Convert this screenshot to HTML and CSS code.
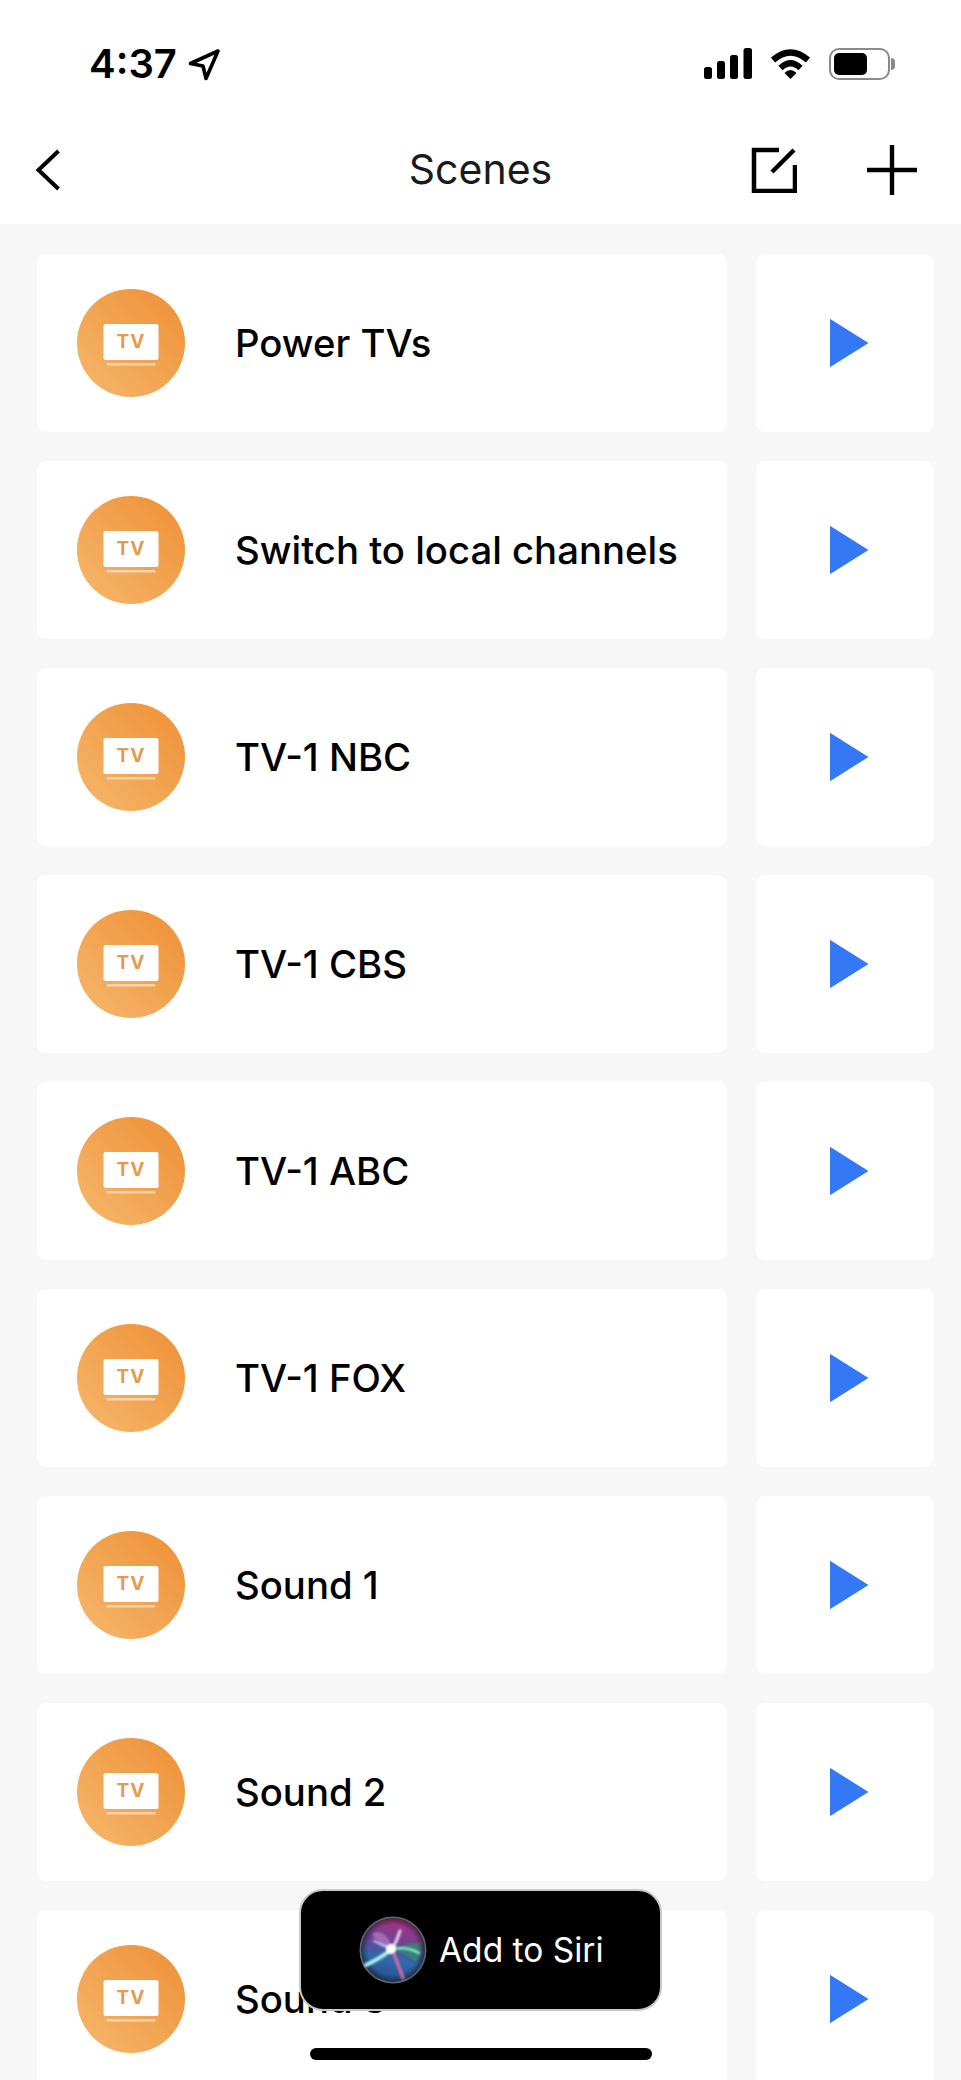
FILE: index.html
```html
<!DOCTYPE html>
<html lang="en">
<head>
    <meta charset="UTF-8">
    <meta name="viewport" content="width=device-width, initial-scale=1.0">
    <title>Scenes</title>
    <link rel="stylesheet" href="styles.css">
</head>
<body>
    <svg class="defs" width="0" height="0">
        <symbol id="tv-icon" viewBox="0 0 108 108">
            <rect x="26.5" y="35" width="55" height="36" rx="2" fill="#fff"/>
            <rect x="29.5" y="74" width="49" height="2.5" rx="1" fill="#fff" opacity="0.5"/>
        </symbol>
    </svg>

    <div class="phone">
        <header class="top">
            <div class="status-bar">
                <div class="status-left">
                    <span class="time">4:37</span>
                    <svg class="arrow" width="33" height="33" viewBox="0 0 33 33">
                        <path d="M2.5 15.5 L30 3 L18 30.5 L15 18 Z" fill="none" stroke="#000" stroke-width="3.6" stroke-linejoin="round"/>
                    </svg>
                </div>
                <div class="status-right">
                    <svg width="48" height="31" viewBox="0 0 48 31">
                        <rect x="0" y="19" width="8" height="12" rx="2.5"/>
                        <rect x="13" y="13" width="8" height="18" rx="2.5"/>
                        <rect x="26" y="7" width="8" height="24" rx="2.5"/>
                        <rect x="39.5" y="0" width="8.5" height="31" rx="2.5"/>
                    </svg>
                    <svg width="41" height="31" viewBox="0 0 41 31">
                        <path d="M3 12 Q20.5 -3 38 12" fill="none" stroke="#000" stroke-width="6.4" stroke-linecap="butt"/>
                        <path d="M10.5 20 Q20.5 10.5 30.5 20" fill="none" stroke="#000" stroke-width="6" stroke-linecap="butt"/>
                        <path d="M14.5 25 Q20.5 19 26.5 25 L20.5 31 Z"/>
                    </svg>
                    <div class="battery">
                        <div class="battery-level"></div>
                        <div class="battery-nub"></div>
                    </div>
                </div>
            </div>
            <nav class="nav">
                <svg class="back" width="26" height="44" viewBox="0 0 26 44">
                    <path d="M23.5 3 L3.5 22 L23.5 41" fill="none" stroke="#000" stroke-width="4"/>
                </svg>
                <h1>Scenes</h1>
                <div class="nav-actions">
                    <svg width="46" height="46" viewBox="0 0 46 46">
                        <path d="M28 3 H3 V44 H44 V18" fill="none" stroke="#000" stroke-width="4.5"/>
                        <path d="M21 25 L43 3" fill="none" stroke="#000" stroke-width="4.5"/>
                    </svg>
                    <svg width="50" height="50" viewBox="0 0 50 50">
                        <path d="M25 0 V50 M0 25 H50" fill="none" stroke="#000" stroke-width="4.4"/>
                    </svg>
                </div>
            </nav>
        </header>

        <main class="scene-list">
            <div class="scene">
                <div class="scene-card">
                    <div class="scene-icon"><svg width="108" height="108"><use href="#tv-icon"/></svg><span class="tv-label">TV</span></div>
                    <span class="scene-name">Power TVs</span>
                </div>
                <div class="play-card"><div class="play"></div></div>
            </div>
            <div class="scene">
                <div class="scene-card">
                    <div class="scene-icon"><svg width="108" height="108"><use href="#tv-icon"/></svg><span class="tv-label">TV</span></div>
                    <span class="scene-name">Switch to local channels</span>
                </div>
                <div class="play-card"><div class="play"></div></div>
            </div>
            <div class="scene">
                <div class="scene-card">
                    <div class="scene-icon"><svg width="108" height="108"><use href="#tv-icon"/></svg><span class="tv-label">TV</span></div>
                    <span class="scene-name">TV-1 NBC</span>
                </div>
                <div class="play-card"><div class="play"></div></div>
            </div>
            <div class="scene">
                <div class="scene-card">
                    <div class="scene-icon"><svg width="108" height="108"><use href="#tv-icon"/></svg><span class="tv-label">TV</span></div>
                    <span class="scene-name">TV-1 CBS</span>
                </div>
                <div class="play-card"><div class="play"></div></div>
            </div>
            <div class="scene">
                <div class="scene-card">
                    <div class="scene-icon"><svg width="108" height="108"><use href="#tv-icon"/></svg><span class="tv-label">TV</span></div>
                    <span class="scene-name">TV-1 ABC</span>
                </div>
                <div class="play-card"><div class="play"></div></div>
            </div>
            <div class="scene">
                <div class="scene-card">
                    <div class="scene-icon"><svg width="108" height="108"><use href="#tv-icon"/></svg><span class="tv-label">TV</span></div>
                    <span class="scene-name">TV-1 FOX</span>
                </div>
                <div class="play-card"><div class="play"></div></div>
            </div>
            <div class="scene">
                <div class="scene-card">
                    <div class="scene-icon"><svg width="108" height="108"><use href="#tv-icon"/></svg><span class="tv-label">TV</span></div>
                    <span class="scene-name">Sound 1</span>
                </div>
                <div class="play-card"><div class="play"></div></div>
            </div>
            <div class="scene">
                <div class="scene-card">
                    <div class="scene-icon"><svg width="108" height="108"><use href="#tv-icon"/></svg><span class="tv-label">TV</span></div>
                    <span class="scene-name">Sound 2</span>
                </div>
                <div class="play-card"><div class="play"></div></div>
            </div>
            <div class="scene">
                <div class="scene-card">
                    <div class="scene-icon"><svg width="108" height="108"><use href="#tv-icon"/></svg><span class="tv-label">TV</span></div>
                    <span class="scene-name">Sound 3</span>
                </div>
                <div class="play-card"><div class="play"></div></div>
            </div>
        </main>

        <button class="siri-button">
            <svg width="68" height="68" viewBox="0 0 68 68">
                <defs>
                    <linearGradient id="siri-bg" x1="0.6" y1="0" x2="0.4" y2="1">
                        <stop offset="0" stop-color="#b2307f"/>
                        <stop offset="0.4" stop-color="#6a4296"/>
                        <stop offset="0.65" stop-color="#2f69ad"/>
                        <stop offset="1" stop-color="#274f8c"/>
                    </linearGradient>
                    <radialGradient id="siri-edge" cx="50%" cy="50%" r="50%">
                        <stop offset="0.78" stop-color="#111" stop-opacity="0"/>
                        <stop offset="1" stop-color="#111" stop-opacity="0.55"/>
                    </radialGradient>
                    <filter id="siri-blur"><feGaussianBlur stdDeviation="0.8"/></filter>
                </defs>
                <circle cx="34" cy="34" r="32.5" fill="url(#siri-bg)" stroke="#5b6472" stroke-width="2"/>
                <path d="M63 27 Q64 38 58 46 Q46 38 34 33 Q48 26 63 27 Z" fill="#2f8e6e" opacity="0.8" filter="url(#siri-blur)"/>
                <path d="M13 17 Q28 13 34 33 Q20 33 13 17 Z" fill="#c98fd0" opacity="0.55" filter="url(#siri-blur)"/>
                <circle cx="34" cy="34" r="32" fill="url(#siri-edge)"/>
                <g filter="url(#siri-blur)" fill="none" stroke-linecap="round">
                    <path d="M7 49 Q22 42 33 33" stroke="#a8f4ea" stroke-width="4"/>
                    <path d="M33 33 Q48 30 60 37" stroke="#8ff0cf" stroke-width="2.4"/>
                    <path d="M41 15 Q38 25 33 33" stroke="#ecd0ec" stroke-width="3"/>
                    <path d="M33 33 Q39 48 44 62" stroke="#cf6aa6" stroke-width="3.4"/>
                    <path d="M15 25 Q25 30 33 33" stroke="#a9cbe8" stroke-width="2"/>
                </g>
                <circle cx="32" cy="33" r="5" fill="#fff" filter="url(#siri-blur)"/>
            </svg>
            <span>Add to Siri</span>
        </button>
        <div class="home-bar"></div>
    </div>
</body>
</html>
```

FILE: styles.css
```css
* {
    margin: 0;
    padding: 0;
    box-sizing: border-box;
}

html, body {
    height: 100%;
    overflow: hidden;
}

body {
    font-family: 'Inter', 'Liberation Sans', sans-serif;
    color: #000;
    background-color: #f7f7f7;
}

.defs {
    position: absolute;
}

.phone {
    position: relative;
    width: 961px;
    height: 2080px;
    overflow: hidden;
}

.top {
    height: 224px;
    background-color: #fff;
}

.status-bar {
    height: 128px;
    padding: 48px 71px 0 89px;
    display: flex;
    justify-content: space-between;
    align-items: flex-start;
}

.status-left {
    display: flex;
    align-items: center;
    gap: 11px;
    height: 32px;
}

.time {
    font-size: 40px;
    font-weight: 600;
    line-height: 32px;
}

.status-right {
    display: flex;
    align-items: flex-start;
    gap: 18px;
}

.battery {
    position: relative;
    width: 61px;
    height: 32px;
    border: 2px solid #8a8a8a;
    border-radius: 10px;
    padding: 3px;
}

.battery-level {
    width: 33px;
    height: 22px;
    background-color: #000;
    border-radius: 5px;
}

.battery-nub {
    position: absolute;
    top: 8px;
    right: -7px;
    width: 4px;
    height: 12px;
    background-color: #8a8a8a;
    border-radius: 0 4px 4px 0;
}

.nav {
    position: relative;
    height: 96px;
    padding: 0 44px 0 35px;
    display: flex;
    justify-content: space-between;
    align-items: center;
    margin-top: -6px;
}

.nav h1 {
    position: absolute;
    left: 0;
    right: 0;
    top: 0;
    line-height: 94px;
    text-align: center;
    font-size: 41px;
    font-weight: 400;
    color: #1a1a1a;
}

.nav-actions {
    display: flex;
    align-items: center;
    gap: 70px;
}

.scene-list {
    padding: 30px 27px 0 37px;
    display: flex;
    flex-direction: column;
    gap: 29px;
}

.scene {
    display: flex;
    gap: 29px;
}

.scene-card, .play-card {
    height: 178px;
    background-color: #fff;
    border-radius: 9px;
    display: flex;
    align-items: center;
}

.scene-card {
    flex: 1;
    padding-left: 40px;
    gap: 50px;
}

.play-card {
    width: 178px;
    justify-content: center;
}

.play {
    width: 39px;
    height: 49px;
    margin-left: 8px;
    background-color: #3478f6;
    clip-path: polygon(0 0, 100% 50%, 0 100%);
}

.scene-icon {
    position: relative;
    width: 108px;
    height: 108px;
    border-radius: 50%;
    background: linear-gradient(to top right, #f6b86d, #ee8f35);
}

.tv-label {
    position: absolute;
    left: 0;
    right: 0;
    top: 42px;
    text-align: center;
    font-size: 19px;
    line-height: 22px;
    font-weight: 700;
    letter-spacing: 1px;
    color: #e59a4c;
}

.scene-name {
    font-size: 38.3px;
    font-weight: 450;
    color: #000;
}

.siri-button {
    position: absolute;
    left: 299px;
    top: 1889px;
    width: 363px;
    height: 122px;
    background-color: #000;
    border: 2px solid #c8c8c8;
    border-radius: 24px;
    display: flex;
    align-items: center;
    padding-left: 58px;
    gap: 12px;
    font-family: inherit;
}

.siri-button span {
    font-size: 33.5px;
    color: #fff;
}

.home-bar {
    position: absolute;
    left: 310px;
    top: 2048px;
    width: 342px;
    height: 12px;
    border-radius: 6px;
    background-color: #000;
}
```
